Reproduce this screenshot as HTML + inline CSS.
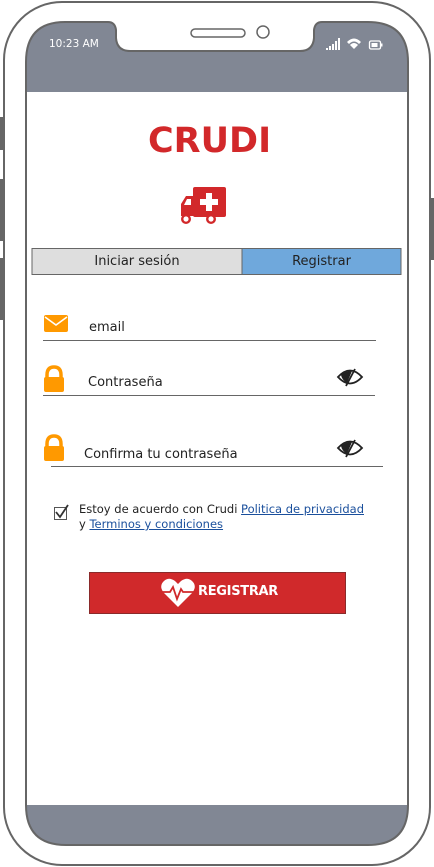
<!DOCTYPE html>
<html><head><meta charset="utf-8"><style>
html,body{margin:0;padding:0;width:434px;height:867px;overflow:hidden;background:#fff;font-family:"DejaVu Sans","Liberation Sans",sans-serif;}
svg{position:absolute;left:0;top:0}
.t{position:absolute;white-space:nowrap;color:#222}
a{color:#1a4f9c;text-decoration:underline}
</style></head><body>
<svg width="434" height="867" viewBox="0 0 434 867">
  <rect x="0" y="117" width="4" height="33" fill="#666"/>
  <rect x="0" y="179" width="4" height="62" fill="#666"/>
  <rect x="0" y="258" width="4" height="62" fill="#666"/>
  <rect x="430" y="198" width="4" height="62" fill="#666"/>
  <rect x="4" y="2" width="426" height="863" rx="58" fill="#fff" stroke="#666" stroke-width="2"/>
  <path d="M65 22 H108 Q115 22 116 30 V38 Q117 51 130 51 H300 Q313 51 314 38 V30 Q315 22 322 22 H368 Q408 22 408 62 V805 Q408 845 368 845 H66 Q26 845 26 805 V62 Q26 22 65 22 Z" fill="#818794" stroke="#666" stroke-width="2"/>
  <rect x="27" y="92" width="380" height="713" fill="#fff"/>
  <rect x="191" y="29" width="54" height="8" rx="4" fill="#fff" stroke="#666" stroke-width="1.5"/>
  <circle cx="263" cy="32" r="6" fill="#fff" stroke="#666" stroke-width="1.5"/>
  <g fill="#fff">
    <rect x="326" y="48" width="2" height="2"/><rect x="329" y="46" width="2" height="4"/>
    <rect x="332" y="44" width="2" height="6"/><rect x="335" y="41" width="2" height="9"/>
    <rect x="338" y="38" width="2" height="12"/>
    <path d="M347 42 Q354 35 361 42 L359 44 Q354 39 349 44Z"/>
    <path d="M350 45 Q354 41 358 45 L354 49Z"/>
  </g>
  <rect x="369.5" y="41" width="11" height="8" rx="1.5" fill="none" stroke="#fff" stroke-width="1.3"/>
  <rect x="371.5" y="43" width="6" height="4" fill="#fff"/>
  <rect x="381" y="43.5" width="1.5" height="3" fill="#fff"/>
  <g fill="#d2282a">
    <rect x="193" y="187" width="33" height="30" rx="2"/>
    <path d="M181 216 V204 L186 196 H194 V216Z"/>
    <circle cx="186" cy="219" r="5"/><circle cx="211" cy="219" r="5"/>
  </g>
  <path d="M184 205 L187 199 H191 V205Z" fill="#fff"/>
  <circle cx="186" cy="219" r="2.6" fill="#fff"/><circle cx="211" cy="219" r="2.6" fill="#fff"/>
  <path d="M206 193 h6 v6 h6 v6 h-6 v6 h-6 v-6 h-6 v-6 h6Z" fill="#fff"/>
  <rect x="32" y="248.5" width="210" height="26" fill="#dedede" stroke="#666"/>
  <rect x="242" y="248.5" width="159" height="26" fill="#6fa8dc" stroke="#666"/>
  <rect x="44" y="315" width="24" height="17" rx="2" fill="#ff9900"/>
  <path d="M45 317 L56 325 L67 317" fill="none" stroke="#fff" stroke-width="1.6"/>
  <line x1="43" y1="340.5" x2="376" y2="340.5" stroke="#666" stroke-width="1"/>
  <path d="M47 379 V375 Q47 367 54 367 Q61 367 61 375 V379" fill="none" stroke="#ff9900" stroke-width="3.5"/>
  <rect x="44" y="377" width="20" height="15" rx="2" fill="#ff9900"/>
  <line x1="43" y1="395.5" x2="375" y2="395.5" stroke="#666" stroke-width="1"/>
  <path d="M47 448 V444 Q47 436 54 436 Q61 436 61 444 V448" fill="none" stroke="#ff9900" stroke-width="3.5"/>
  <rect x="44" y="446" width="20" height="15" rx="2" fill="#ff9900"/>
  <line x1="51" y1="466.5" x2="383" y2="466.5" stroke="#666" stroke-width="1"/>
  <g id="eye">
    <path d="M338 377 Q350 364 362 377 Q350 390 338 377Z" fill="none" stroke="#222" stroke-width="1.8"/>
    <path d="M341 375 Q345 371 352 371 L347 383 Q342 380 341 375Z" fill="#222"/>
    <line x1="355" y1="369" x2="346" y2="386" stroke="#222" stroke-width="1.8"/>
  </g>
  <use href="#eye" x="0" y="71"/>
  <rect x="54.5" y="507.5" width="12" height="12" fill="#fff" stroke="#555"/>
  <path d="M56 512 L60 517 L68 505" fill="none" stroke="#333" stroke-width="1.8"/>
  <rect x="89.5" y="572.5" width="256" height="41" fill="#d0292b" stroke="#8a2a2a"/>
  <path d="M178 607 L164 593 Q159 587 163 582 Q168 576 175 581 L178 584 L181 581 Q188 576 193 582 Q197 587 192 593Z" fill="#fff"/>
  <path d="M162 592 H170 L173 587 L177 599 L181 589 L183 592 H195" fill="none" stroke="#d0292b" stroke-width="1.8"/>
</svg>
<div class="t" style="left:49px;top:38px;font-size:10.5px;color:#fff">10:23 AM</div>
<div class="t" style="left:148px;top:121px;font-size:35px;font-weight:bold;color:#d2282a">CRUDI</div>
<div class="t" style="left:32px;top:254px;width:210px;text-align:center;font-size:13px;color:#222">Iniciar sesión</div>
<div class="t" style="left:242px;top:254px;width:159px;text-align:center;font-size:13px;color:#222">Registrar</div>
<div class="t" style="left:89px;top:320px;font-size:13px">email</div>
<div class="t" style="left:88px;top:375px;font-size:13px">Contraseña</div>
<div class="t" style="left:84px;top:447px;font-size:13px">Confirma tu contraseña</div>
<div class="t" style="left:79px;top:502px;font-size:11.5px;line-height:15px">Estoy de acuerdo con Crudi <a>Politica de privacidad</a><br>y <a>Terminos y condiciones</a></div>
<div class="t" style="left:198px;top:584px;font-size:13px;font-weight:bold;color:#fff;letter-spacing:-0.3px">REGISTRAR</div>
</body></html>
